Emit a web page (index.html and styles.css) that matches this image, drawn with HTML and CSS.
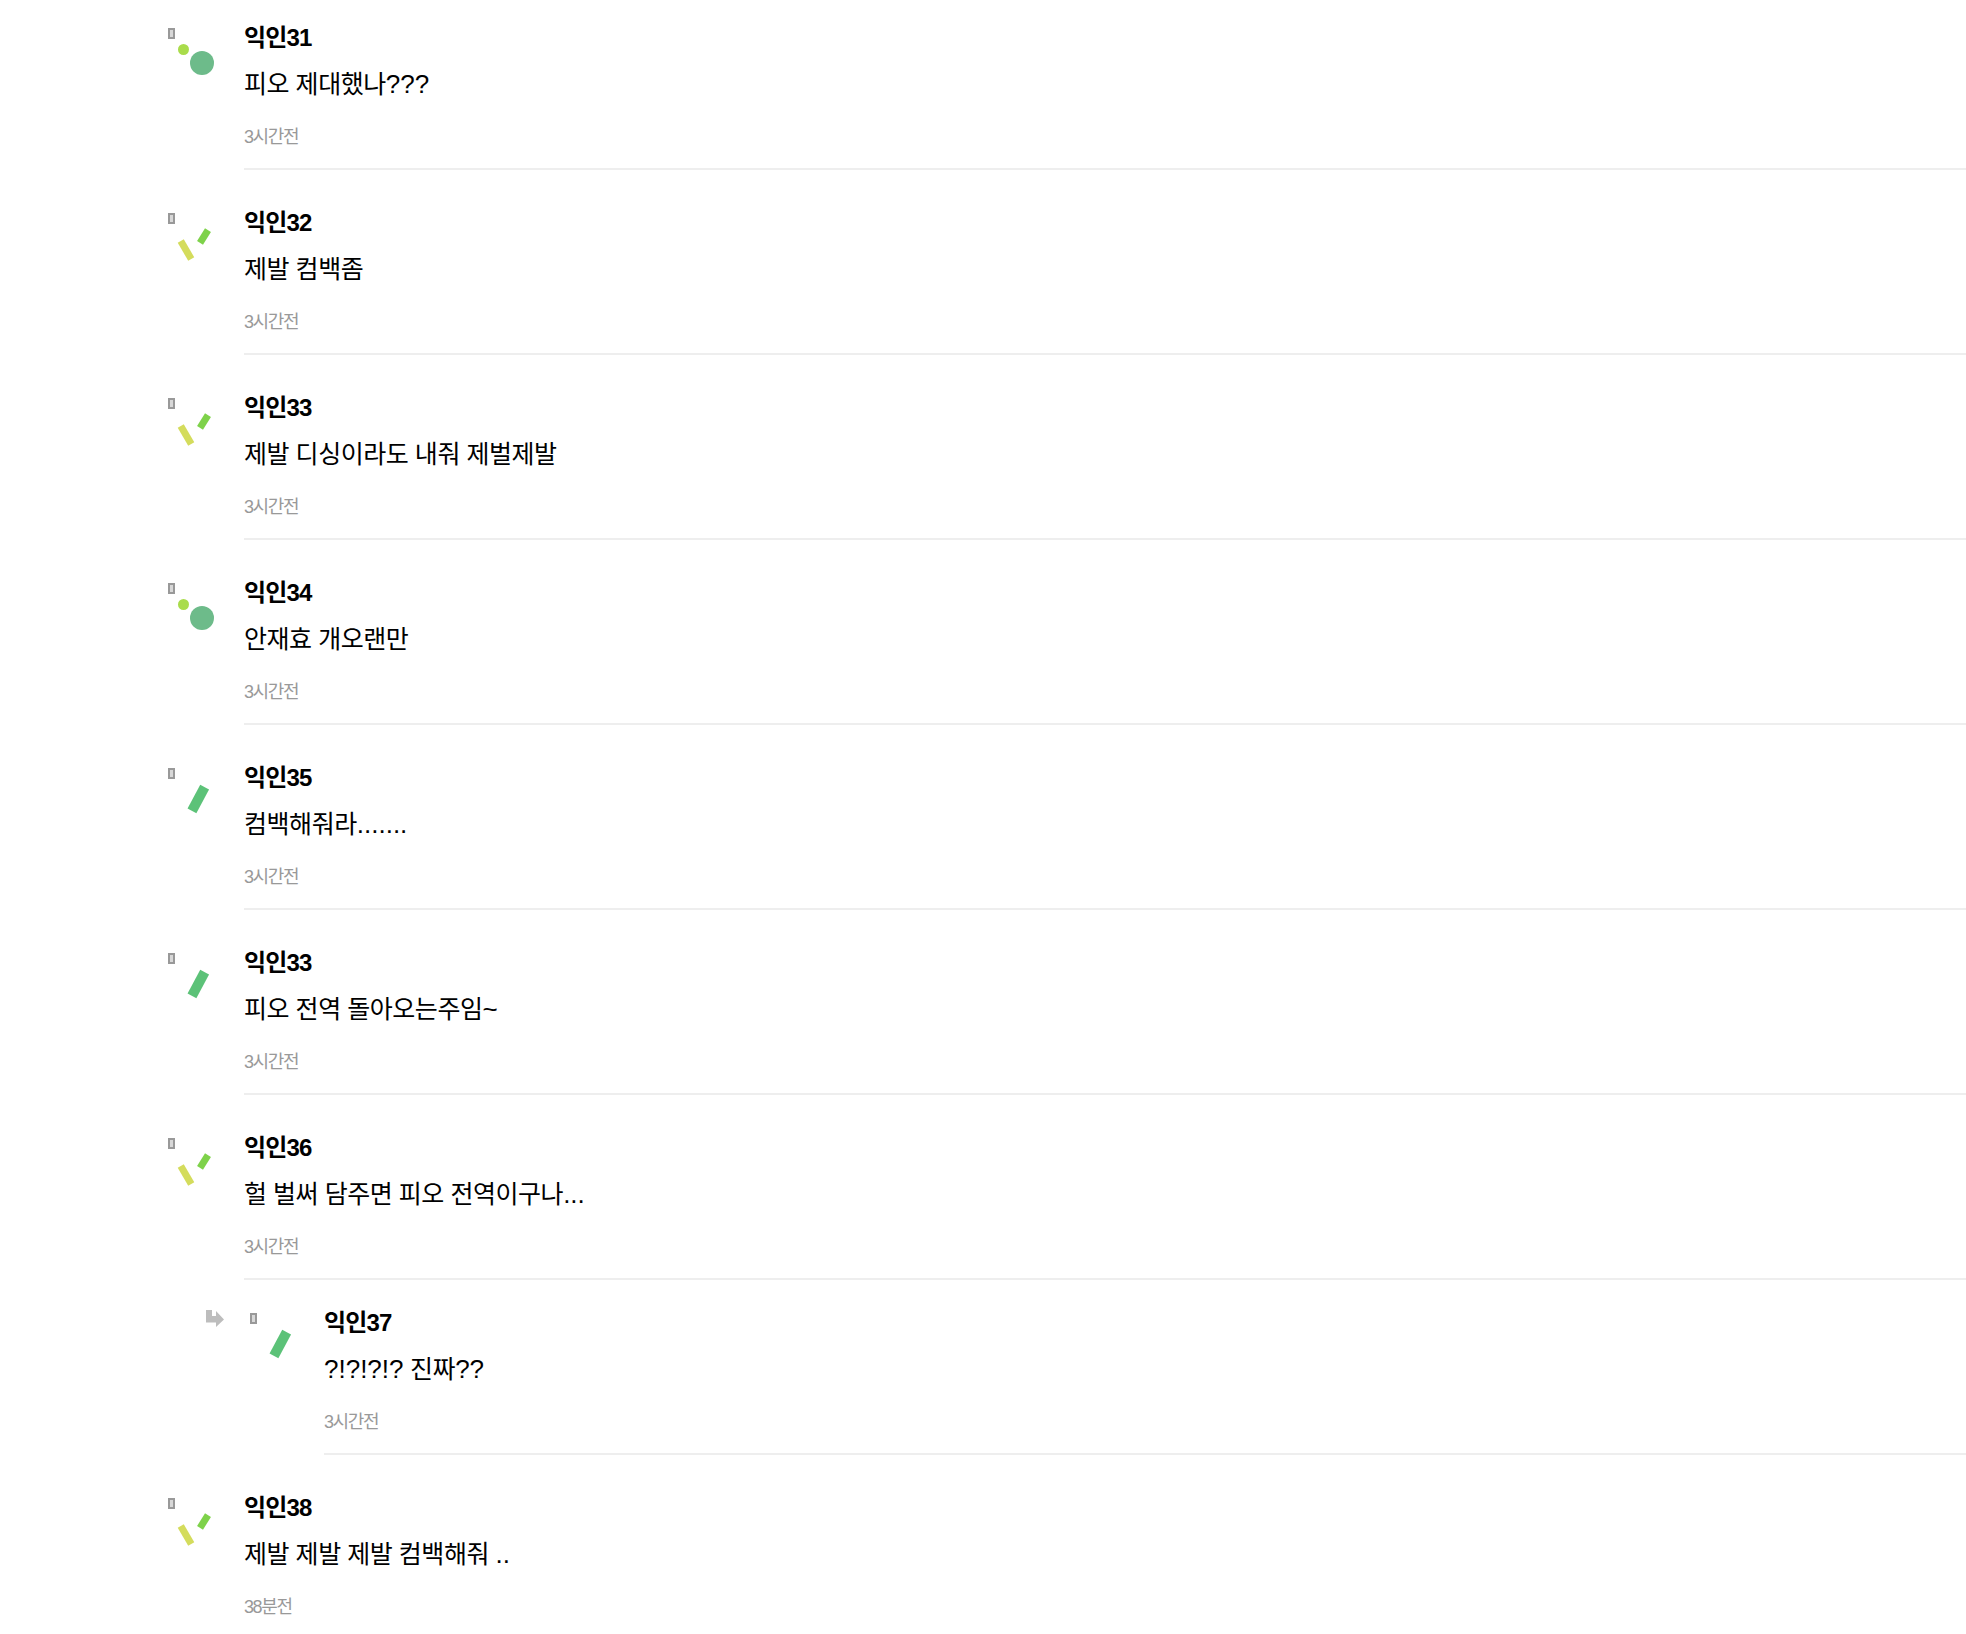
FILE: index.html
```html
<!DOCTYPE html>
<html lang="ko">
<head>
<meta charset="utf-8">
<title>댓글</title>
<link rel="stylesheet" href="styles.css">
</head>
<body>
<svg class="defs" width="0" height="0" aria-hidden="true">
  <symbol id="av-dots" viewBox="0 0 60 60">
    <circle cx="15.5" cy="19.5" r="5.5" fill="#a9dc4b"/>
    <circle cx="34" cy="33" r="12" fill="#6dbb8a"/>
  </symbol>
  <symbol id="av-ticks" viewBox="0 0 60 60">
    <rect x="14.5" y="24.5" width="7" height="21" transform="rotate(-30 18 35)" fill="#d4dc5c"/>
    <rect x="32.5" y="14" width="7" height="15" transform="rotate(32 36 21.5)" fill="#7ed24a"/>
  </symbol>
  <symbol id="av-bar" viewBox="0 0 60 60">
    <rect x="25.3" y="15.5" width="10" height="27" transform="rotate(28 30.3 29)" fill="#5cc278"/>
  </symbol>
</svg>
<main class="list">
  <article class="row">
    <div class="avatar"><span class="tofu"></span><svg class="mark"><use href="#av-dots"/></svg></div>
    <div class="body"><div class="name">익인31</div><p class="text">피오 제대했나<span class="latin">???</span></p><div class="meta">3시간전</div></div>
  </article>
  <article class="row">
    <div class="avatar"><span class="tofu"></span><svg class="mark"><use href="#av-ticks"/></svg></div>
    <div class="body"><div class="name">익인32</div><p class="text">제발 컴백좀</p><div class="meta">3시간전</div></div>
  </article>
  <article class="row">
    <div class="avatar"><span class="tofu"></span><svg class="mark"><use href="#av-ticks"/></svg></div>
    <div class="body"><div class="name">익인33</div><p class="text">제발 디싱이라도 내줘 제벌제발</p><div class="meta">3시간전</div></div>
  </article>
  <article class="row">
    <div class="avatar"><span class="tofu"></span><svg class="mark"><use href="#av-dots"/></svg></div>
    <div class="body"><div class="name">익인34</div><p class="text">안재효 개오랜만</p><div class="meta">3시간전</div></div>
  </article>
  <article class="row">
    <div class="avatar"><span class="tofu"></span><svg class="mark"><use href="#av-bar"/></svg></div>
    <div class="body"><div class="name">익인35</div><p class="text">컴백해줘라<span class="latin">.......</span></p><div class="meta">3시간전</div></div>
  </article>
  <article class="row">
    <div class="avatar"><span class="tofu"></span><svg class="mark"><use href="#av-bar"/></svg></div>
    <div class="body"><div class="name">익인33</div><p class="text">피오 전역 돌아오는주임<span class="latin">~</span></p><div class="meta">3시간전</div></div>
  </article>
  <article class="row">
    <div class="avatar"><span class="tofu"></span><svg class="mark"><use href="#av-ticks"/></svg></div>
    <div class="body"><div class="name">익인36</div><p class="text">헐 벌써 담주면 피오 전역이구나<span class="latin">...</span></p><div class="meta">3시간전</div></div>
  </article>
  <article class="row reply">
    <div class="reply-arrow">
      <svg width="18" height="18" viewBox="0 0 18 18"><path d="M0 0H6V6H10V1L18 9.5L10 17V12.5H0Z" fill="#bdbdbd"/></svg>
    </div>
    <div class="avatar"><span class="tofu"></span><svg class="mark"><use href="#av-bar"/></svg></div>
    <div class="body"><div class="name">익인37</div><p class="text"><span class="latin">?!?!?!?</span> 진짜<span class="latin">??</span></p><div class="meta">3시간전</div></div>
  </article>
  <article class="row">
    <div class="avatar"><span class="tofu"></span><svg class="mark"><use href="#av-ticks"/></svg></div>
    <div class="body"><div class="name">익인38</div><p class="text">제발 제발 제발 컴백해줘 <span class="latin">..</span></p><div class="meta">38분전</div></div>
  </article>
</main>
</body>
</html>
```
FILE: styles.css
```css
html, body {
  margin: 0;
  padding: 0;
  height: 100%;
  overflow: hidden;
  background: #fff;
}
body {
  font-family: "Liberation Sans", "Noto Sans CJK KR", sans-serif;
  color: #000;
}
.defs {
  display: block;
  height: 0;
}
.list {
  margin-top: -15px;
}
.row {
  display: flex;
  padding-left: 168px;
}
.avatar {
  flex: 0 0 76px;
  padding-top: 43px;
}
.tofu {
  display: block;
  box-sizing: border-box;
  width: 7px;
  height: 11px;
  border: 2px solid #999;
  background: #d8d8d8;
}
.mark {
  display: block;
  width: 60px;
  height: 60px;
  margin-top: -9px;
}
.body {
  flex: 1;
  padding: 36px 0 19px;
  border-bottom: 2px solid #eee;
}
.name {
  height: 34px;
  line-height: 34px;
  font-size: 24px;
  font-weight: 700;
  letter-spacing: -0.8px;
}
.text {
  margin: 11px 0 0;
  height: 36px;
  line-height: 36px;
  font-size: 25px;
  letter-spacing: -0.45px;
}
.latin {
  font-size: 26px;
  letter-spacing: 0;
}
.meta {
  margin-top: 23px;
  height: 24px;
  line-height: 24px;
  font-size: 18px;
  color: #999;
  letter-spacing: -1.4px;
}
.reply {
  padding-left: 206px;
}
.reply .avatar {
  flex-basis: 74px;
  padding-top: 33px;
}
.reply .body {
  padding-top: 26px;
}
.reply-arrow {
  flex: 0 0 44px;
  padding-top: 30px;
}
.reply-arrow svg {
  display: block;
}
```
